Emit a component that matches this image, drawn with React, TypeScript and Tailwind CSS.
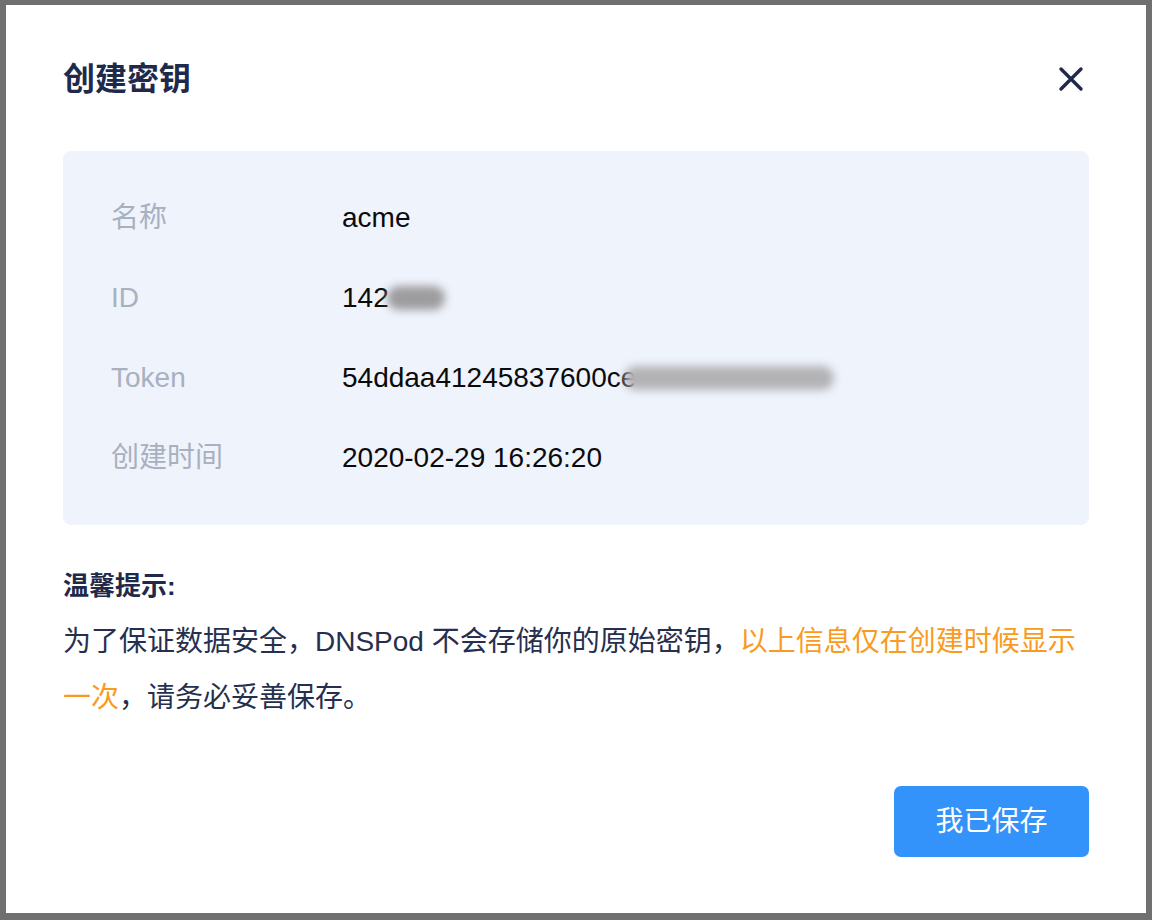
import React from "react";

const FONT = '"Liberation Sans", "Noto Sans CJK SC", sans-serif';

function Row({ label, children }: { label: string; children: React.ReactNode }) {
  return (
    <div className="flex h-[80px] items-center">
      <div className="w-[231px] shrink-0 text-[28px] leading-[40px] text-[#a9b0be]">{label}</div>
      <div className="flex items-center whitespace-nowrap text-[28px] leading-[40px] text-[#0b0b0b]">{children}</div>
    </div>
  );
}

export default function App() {
  return (
    <div className="h-[920px] w-full bg-[#707070] px-[6px] pt-[5px]" style={{ fontFamily: FONT }}>
      <div className="flex h-[908px] flex-col bg-white px-[57px] pt-[54px]">
        <div className="flex h-[40px] items-center justify-between">
          <h1 className="text-[32px] font-bold leading-[40px] text-[#1f2a4b]">创建密钥</h1>
          <button className="flex h-[36px] w-[36px] items-center justify-center" aria-label="关闭">
            <svg width="26" height="26" viewBox="0 0 26 26" fill="none">
              <path d="M3 3 L23 23 M23 3 L3 23" stroke="#1f2a4b" strokeWidth="3.4" strokeLinecap="round" />
            </svg>
          </button>
        </div>

        <div className="mt-[52px] rounded-[8px] bg-[#eff3fc] px-[48px] py-[27px]">
          <Row label="名称">acme</Row>
          <Row label="ID">
            <span>142</span>
            <span className="ml-[-2px] inline-block h-[24px] w-[58px] rounded-full bg-[#9d9d9f] blur-[4px]" />
          </Row>
          <Row label="Token">
            <span>54ddaa41245837600ce</span>
            <span className="ml-[-12px] inline-block h-[24px] w-[210px] rounded-full bg-[#b3b3b6] blur-[4px]" />
          </Row>
          <Row label="创建时间">
            <span>2020-02-29 16:26:20</span>
          </Row>
        </div>

        <div className="mt-[34px] text-[26px] font-bold leading-[55px] text-[#1f2a4b]">温馨提示:</div>
        <p className="text-[28px] leading-[55.5px] text-[#262f4e]">
          为了保证数据安全，DNSPod 不会存储你的原始密钥，
          <span className="text-[#f99b22]">
            以上信息仅在创建时候显示
            <br />
            一次
          </span>
          ，请务必妥善保存。
        </p>

        <div className="mt-[61px] flex justify-end">
          <button className="flex h-[71px] w-[195px] items-center justify-center rounded-[7px] bg-[#3492fb] text-[28px] leading-[40px] text-white">
            我已保存
          </button>
        </div>
      </div>
    </div>
  );
}
